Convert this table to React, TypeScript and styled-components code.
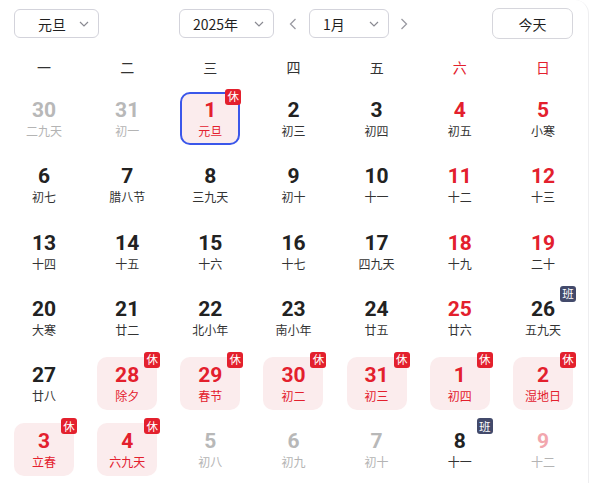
import React from "react";
import styled, { createGlobalStyle, css } from "styled-components";

const GlobalStyle = createGlobalStyle`
  body {
    margin: 0;
    background: #fff;
    font-family: "Noto Sans CJK SC", "Noto Sans", sans-serif;
  }
`;

type NumTone = "dark" | "red" | "gray" | "pale";
type LunarTone = "dark" | "red" | "gray";

interface Day {
  n: number;
  l: string;
  num: NumTone;
  lun: LunarTone;
  rest?: boolean;
  work?: boolean;
  sel?: boolean;
}

const d = (n: number, l: string, num: NumTone = "dark", lun: LunarTone = "dark"): Day => ({ n, l, num, lun });
const rest = (n: number, l: string, sel = false): Day => ({ n, l, num: "red", lun: "red", rest: true, sel });
const work = (n: number, l: string): Day => ({ n, l, num: "dark", lun: "dark", work: true });

const days: Day[] = [
  d(30, "二九天", "gray", "gray"), d(31, "初一", "gray", "gray"), rest(1, "元旦", true), d(2, "初三"), d(3, "初四"), d(4, "初五", "red"), d(5, "小寒", "red"),
  d(6, "初七"), d(7, "腊八节"), d(8, "三九天"), d(9, "初十"), d(10, "十一"), d(11, "十二", "red"), d(12, "十三", "red"),
  d(13, "十四"), d(14, "十五"), d(15, "十六"), d(16, "十七"), d(17, "四九天"), d(18, "十九", "red"), d(19, "二十", "red"),
  d(20, "大寒"), d(21, "廿二"), d(22, "北小年"), d(23, "南小年"), d(24, "廿五"), d(25, "廿六", "red"), work(26, "五九天"),
  d(27, "廿八"), rest(28, "除夕"), rest(29, "春节"), rest(30, "初二"), rest(31, "初三"), rest(1, "初四"), rest(2, "湿地日"),
  rest(3, "立春"), rest(4, "六九天"), d(5, "初八", "gray", "gray"), d(6, "初九", "gray", "gray"), d(7, "初十", "gray", "gray"), work(8, "十一"), d(9, "十二", "pale", "gray"),
];

const weekdays = ["一", "二", "三", "四", "五", "六", "日"];

const RED = "#e3202d";

const Page = styled.div`
  box-sizing: border-box;
  width: 589px;
  min-height: 483px;
  padding: 8px 15px 0 14px;
  border-right: 1px solid #eeeef0;
  border-top-right-radius: 14px;
`;

const Toolbar = styled.div`
  display: grid;
  grid-template-columns: 1fr auto 1fr;
  align-items: center;
  height: 31px;
`;

const Center = styled.div`
  display: flex;
  align-items: center;
`;

const SelectBox = styled.div<{ $width: number; $padLeft: number }>`
  box-sizing: border-box;
  width: ${p => p.$width}px;
  height: 29px;
  display: flex;
  align-items: center;
  justify-content: space-between;
  padding: 0 9px 0 ${p => p.$padLeft}px;
  border: 1px solid #d3d3db;
  border-radius: 6px;
  font-size: 14px;
  color: #1f1f1f;
  background: #fff;
`;

const Arrow = styled.div<{ $left: number; $right: number }>`
  width: 8px;
  height: 12px;
  margin: 0 ${p => p.$right}px 0 ${p => p.$left}px;
  display: flex;
`;

const TodayButton = styled.div`
  justify-self: end;
  box-sizing: border-box;
  width: 81px;
  height: 31px;
  display: flex;
  align-items: center;
  justify-content: center;
  border: 1px solid #d6d6dc;
  border-radius: 7px;
  font-size: 14px;
  color: #1f1f1f;
`;

const WeekHeader = styled.div`
  display: grid;
  grid-template-columns: repeat(7, 60px);
  justify-content: space-between;
  margin: 18px 0 15px;
`;

const WeekLabel = styled.div<{ $weekend: boolean }>`
  text-align: center;
  font-size: 14px;
  line-height: 20px;
  color: ${p => (p.$weekend ? RED : "#333")};
`;

const DayGrid = styled.div`
  display: grid;
  grid-template-columns: repeat(7, 60px);
  grid-auto-rows: 53px;
  row-gap: 13.3px;
  justify-content: space-between;
`;

const DayCell = styled.div<{ $rest: boolean; $sel: boolean }>`
  position: relative;
  box-sizing: border-box;
  display: flex;
  flex-direction: column;
  align-items: center;
  padding-top: 7px;
  border-radius: 10px;
  ${p => p.$rest && css`background: #fbeced;`}
  ${p => p.$sel && css`border: 2px solid #3b57ea; padding-top: 5px;`}
`;

const numColors: Record<NumTone, string> = {
  dark: "#222",
  red: RED,
  gray: "#b8b8b8",
  pale: "#f2a7ae",
};

const lunarColors: Record<LunarTone, string> = {
  dark: "#333",
  red: RED,
  gray: "#b4b4b4",
};

const DayNum = styled.div<{ $tone: NumTone }>`
  font-family: Roboto, "DejaVu Sans", sans-serif;
  font-weight: 700;
  font-size: 21px;
  line-height: 23px;
  color: ${p => numColors[p.$tone]};
`;

const Lunar = styled.div<{ $tone: LunarTone }>`
  font-size: 12px;
  line-height: 16px;
  margin-top: 1px;
  color: ${p => lunarColors[p.$tone]};
`;

const Badge = styled.span<{ $work: boolean }>`
  position: absolute;
  top: -5px;
  right: -3px;
  width: 16px;
  height: 16px;
  border-radius: 3px;
  display: flex;
  align-items: center;
  justify-content: center;
  font-size: 11.5px;
  line-height: 1;
  color: #fff;
  background: ${p => (p.$work ? "#434a6b" : RED)};
`;

const ChevronDown = () => (
  <svg width="10" height="6" viewBox="0 0 10 6">
    <polyline points="1,1 5,5 9,1" fill="none" stroke="#8a8a92" strokeWidth="1.2" />
  </svg>
);

const ChevronSide = ({ dir }: { dir: "left" | "right" }) => (
  <svg width="8" height="12" viewBox="0 0 8 12">
    <polyline
      points={dir === "left" ? "6.5,1 1.5,6 6.5,11" : "1.5,1 6.5,6 1.5,11"}
      fill="none"
      stroke="#9a9aa2"
      strokeWidth="1.3"
    />
  </svg>
);

const Select = ({ label, width, padLeft }: { label: string; width: number; padLeft: number }) => (
  <SelectBox $width={width} $padLeft={padLeft}>
    <span>{label}</span>
    <ChevronDown />
  </SelectBox>
);

const App: React.FC = () => {
  return (
    <>
      <GlobalStyle />
      <Page>
        <Toolbar>
          <Select label="元旦" width={85} padLeft={23} />
          <Center>
            <Select label="2025年" width={95} padLeft={13} />
            <Arrow $left={15} $right={12}>
              <ChevronSide dir="left" />
            </Arrow>
            <Select label="1月" width={80} padLeft={13} />
            <Arrow $left={11} $right={0}>
              <ChevronSide dir="right" />
            </Arrow>
          </Center>
          <TodayButton>今天</TodayButton>
        </Toolbar>

        <WeekHeader>
          {weekdays.map((w, i) => (
            <WeekLabel key={w} $weekend={i >= 5}>
              {w}
            </WeekLabel>
          ))}
        </WeekHeader>

        <DayGrid>
          {days.map((day, i) => (
            <DayCell key={i} $rest={!!day.rest} $sel={!!day.sel}>
              <DayNum $tone={day.num}>{day.n}</DayNum>
              <Lunar $tone={day.lun}>{day.l}</Lunar>
              {(day.rest || day.work) && <Badge $work={!!day.work}>{day.work ? "班" : "休"}</Badge>}
            </DayCell>
          ))}
        </DayGrid>
      </Page>
    </>
  );
};

export default App;
